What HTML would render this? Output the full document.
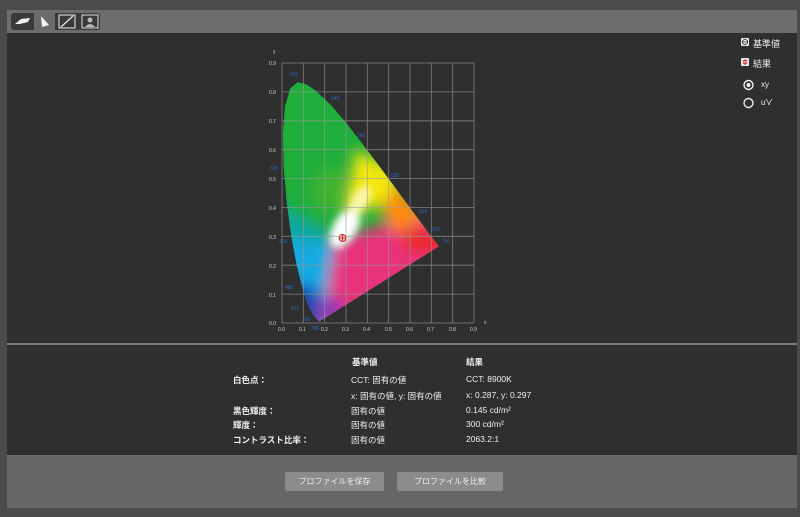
<!DOCTYPE html>
<html><head><meta charset="utf-8"><style>
html,body{margin:0;padding:0;}
body{width:800px;height:517px;background:#4b4b4b;position:relative;overflow:hidden;font-family:"Liberation Sans","Noto Sans CJK JP",sans-serif;}
.tb{position:absolute;left:7px;top:10px;width:790px;height:23px;background:#6d6d6d;}
.grp{position:absolute;left:11px;top:13px;width:89px;height:17px;background:#3a3a3a;border-radius:3px;}
.btn{position:absolute;top:13px;width:22px;height:17px;}
.main{position:absolute;left:7px;top:33px;width:790px;height:422px;background:#2f2f2f;}
.sep{position:absolute;left:7px;top:343px;width:790px;height:2px;background:#7a7a7a;}
.bot{position:absolute;left:7px;top:455px;width:790px;height:53px;background:#676767;}
.pb{position:absolute;top:472px;height:19px;background:#8c8c8c;border-radius:2px;color:#eee;font-size:8px;text-align:center;line-height:19px;}
.t{position:absolute;color:#f0f0f0;font-size:8.5px;white-space:nowrap;}
.b{font-weight:bold;}
.lg{position:absolute;color:#eee;font-size:9px;}
</style></head><body>
<div class="tb"></div>
<div class="grp"></div>
<svg class="btn" style="left:11px" viewBox="0 0 22 17"><path d="M4 11 L10 6 L19 5 L17 9 L9 11 Z" fill="#f2f2f2"/></svg>
<svg class="btn" style="left:33px" viewBox="0 0 22 17"><rect x="1" y="0" width="21" height="17" fill="#6a6a6a"/><path d="M8 3 L16 12 L9 14 Z" fill="#f2f2f2"/></svg>
<svg class="btn" style="left:56px" viewBox="0 0 22 17"><rect x="3" y="2" width="16" height="13" fill="none" stroke="#eee" stroke-width="1"/><path d="M5 14 L17 3" stroke="#eee" stroke-width="1.2"/></svg>
<svg class="btn" style="left:79px" viewBox="0 0 22 17"><rect x="3" y="2" width="16" height="13" fill="none" stroke="#ddd" stroke-width="1"/><circle cx="11" cy="7" r="2.5" fill="#bbb"/><path d="M6 14 Q11 8 16 14 Z" fill="#bbb"/></svg>
<div class="main"></div>
<div class="sep"></div>
<div class="bot"></div>

<svg style="position:absolute;left:0;top:0" width="800" height="345">
<defs>
<clipPath id="cl"><path d="M319.1,321.6 L312.7,314.3 L308.4,306.2 L305.5,297.9 L301.4,284.6 L296.7,264.9 L291.6,237.8 L286.9,203.7 L283.7,167.6 L282.9,133.8 L285,106.3 L290.3,88.4 L297.8,82.1 L306.3,84.4 L315.1,90.1 L331.1,105.2 L346.4,123.1 L361.6,142.7 L376.7,162.7 L391.2,182.3 L404.6,200.5 L415.7,215.5 L429.4,234 L438.8,246.4 Z"/></clipPath>
<filter id="bl" x="-50%" y="-50%" width="200%" height="200%"><feGaussianBlur stdDeviation="7"/></filter>
<filter id="bs" x="-50%" y="-50%" width="200%" height="200%"><feGaussianBlur stdDeviation="4"/></filter>
</defs>
<g clip-path="url(#cl)">
<rect x="270" y="70" width="180" height="260" fill="#1fae3c"/>
<g filter="url(#bl)">
<path d="M270,200 L300,215 L343,240 L460,240 L460,340 L270,340 Z" fill="#0fa9a0"/>
<path d="M335,240 L460,200 L460,340 L320,340 Z" fill="#e8337c"/>
<path d="M270,235 L335,245 L320,340 L270,340 Z" fill="#12a9e2"/>
<path d="M270,275 L320,290 L318,340 L270,340 Z" fill="#1545b0"/>
<ellipse cx="330" cy="310" rx="14" ry="12" fill="#8a35b8"/>
<path d="M355,150 L400,170 L400,200 L345,215 Z" fill="#f2e60a"/>
<path d="M395,185 L430,215 L400,235 L380,215 Z" fill="#ff8a10"/>
<path d="M405,225 L445,235 L440,255 L400,250 Z" fill="#ec2a22"/>
<ellipse cx="330" cy="190" rx="18" ry="22" fill="#55b82a" opacity="0.6"/>
</g>
<g filter="url(#bs)">
<ellipse cx="345" cy="228" rx="12" ry="22" transform="rotate(30 345 228)" fill="#ffffff"/>
<ellipse cx="360" cy="200" rx="8" ry="16" transform="rotate(30 360 200)" fill="#fbf7b0"/>
</g>
</g>
<g stroke="#9a9a9a" stroke-width="0.8" opacity="0.75" fill="none">
<rect x="282" y="63" width="192" height="260"/>
<path d="M303.3,63V323M324.7,63V323M346,63V323M367.3,63V323M388.7,63V323M410,63V323M431.3,63V323M452.7,63V323"/>
<path d="M282,91.9H474M282,120.8H474M282,149.7H474M282,178.6H474M282,207.4H474M282,236.3H474M282,265.2H474M282,294.1H474"/>
</g>
<g fill="#cfcfcf" font-size="5" font-family="Liberation Sans">
<text x="269" y="65">0.9</text><text x="269" y="94">0.8</text><text x="269" y="123">0.7</text><text x="269" y="152">0.6</text><text x="269" y="181">0.5</text><text x="269" y="210">0.4</text><text x="269" y="239">0.3</text><text x="269" y="268">0.2</text><text x="269" y="297">0.1</text><text x="269" y="325">0.0</text>
<text x="278" y="331">0.0</text><text x="299" y="331">0.1</text><text x="321" y="331">0.2</text><text x="342" y="331">0.3</text><text x="363" y="331">0.4</text><text x="385" y="331">0.5</text><text x="406" y="331">0.6</text><text x="427" y="331">0.7</text><text x="449" y="331">0.8</text><text x="470" y="331">0.9</text>
<text x="273" y="53">y</text><text x="484" y="324">x</text>
</g>
<g fill="#2a66b0" font-size="5" font-family="Liberation Sans">
<text x="290" y="76">520</text><text x="331" y="100">540</text><text x="357" y="137">560</text><text x="391" y="177">580</text><text x="419" y="213">600</text><text x="432" y="231">620</text><text x="442" y="243">700</text><text x="270" y="170">500</text><text x="279" y="243">490</text><text x="285" y="289">480</text><text x="291" y="310">470</text><text x="302" y="321">460</text><text x="311" y="330">380</text>
</g>
<circle cx="342.5" cy="238" r="3.5" fill="#f4c0c0" stroke="#c02020" stroke-width="0.9"/>
<path d="M339,238H346M342.5,234.5V241.5" stroke="#c02020" stroke-width="0.8"/>
<rect x="741" y="38" width="8" height="8" rx="1" fill="#eee"/><circle cx="745" cy="42" r="2.6" fill="none" stroke="#333" stroke-width="0.9"/><path d="M742.5,42H747.5" stroke="#333" stroke-width="0.8"/>
<rect x="741" y="58" width="8" height="8" rx="1" fill="#eee"/><circle cx="745" cy="62" r="2.6" fill="#d04040"/><path d="M742.5,62H747.5" stroke="#fff" stroke-width="0.8"/>
<circle cx="748.5" cy="85" r="4.5" fill="none" stroke="#eee" stroke-width="1.4"/><circle cx="748.5" cy="85" r="2" fill="#eee"/>
<circle cx="748.5" cy="103" r="4.5" fill="none" stroke="#eee" stroke-width="1.4"/>
</svg>
<div class="lg" style="left:753px;top:37px">基準値</div>
<div class="lg" style="left:753px;top:57px">結果</div>
<div class="lg" style="left:761px;top:80px;font-size:8px">xy</div>
<div class="lg" style="left:761px;top:98px;font-size:8px">u'v'</div>

<div class="t b" style="left:352px;top:356px">基準値</div>
<div class="t b" style="left:466px;top:356px">結果</div>
<div class="t b" style="left:233px;top:374px">白色点：</div>
<div class="t" style="left:351px;top:374px">CCT: 固有の値</div>
<div class="t" style="left:466px;top:374px">CCT: 8900K</div>
<div class="t" style="left:351px;top:390px">x: 固有の値, y: 固有の値</div>
<div class="t" style="left:466px;top:390px">x: 0.287, y: 0.297</div>
<div class="t b" style="left:233px;top:405px">黒色輝度：</div>
<div class="t" style="left:351px;top:405px">固有の値</div>
<div class="t" style="left:466px;top:405px">0.145 cd/m²</div>
<div class="t b" style="left:233px;top:419px">輝度：</div>
<div class="t" style="left:351px;top:419px">固有の値</div>
<div class="t" style="left:466px;top:419px">300 cd/m²</div>
<div class="t b" style="left:233px;top:434px">コントラスト比率：</div>
<div class="t" style="left:351px;top:434px">固有の値</div>
<div class="t" style="left:466px;top:434px">2063.2:1</div>

<div class="pb" style="left:285px;width:99px">プロファイルを保存</div>
<div class="pb" style="left:397px;width:106px">プロファイルを比較</div>
</body></html>
